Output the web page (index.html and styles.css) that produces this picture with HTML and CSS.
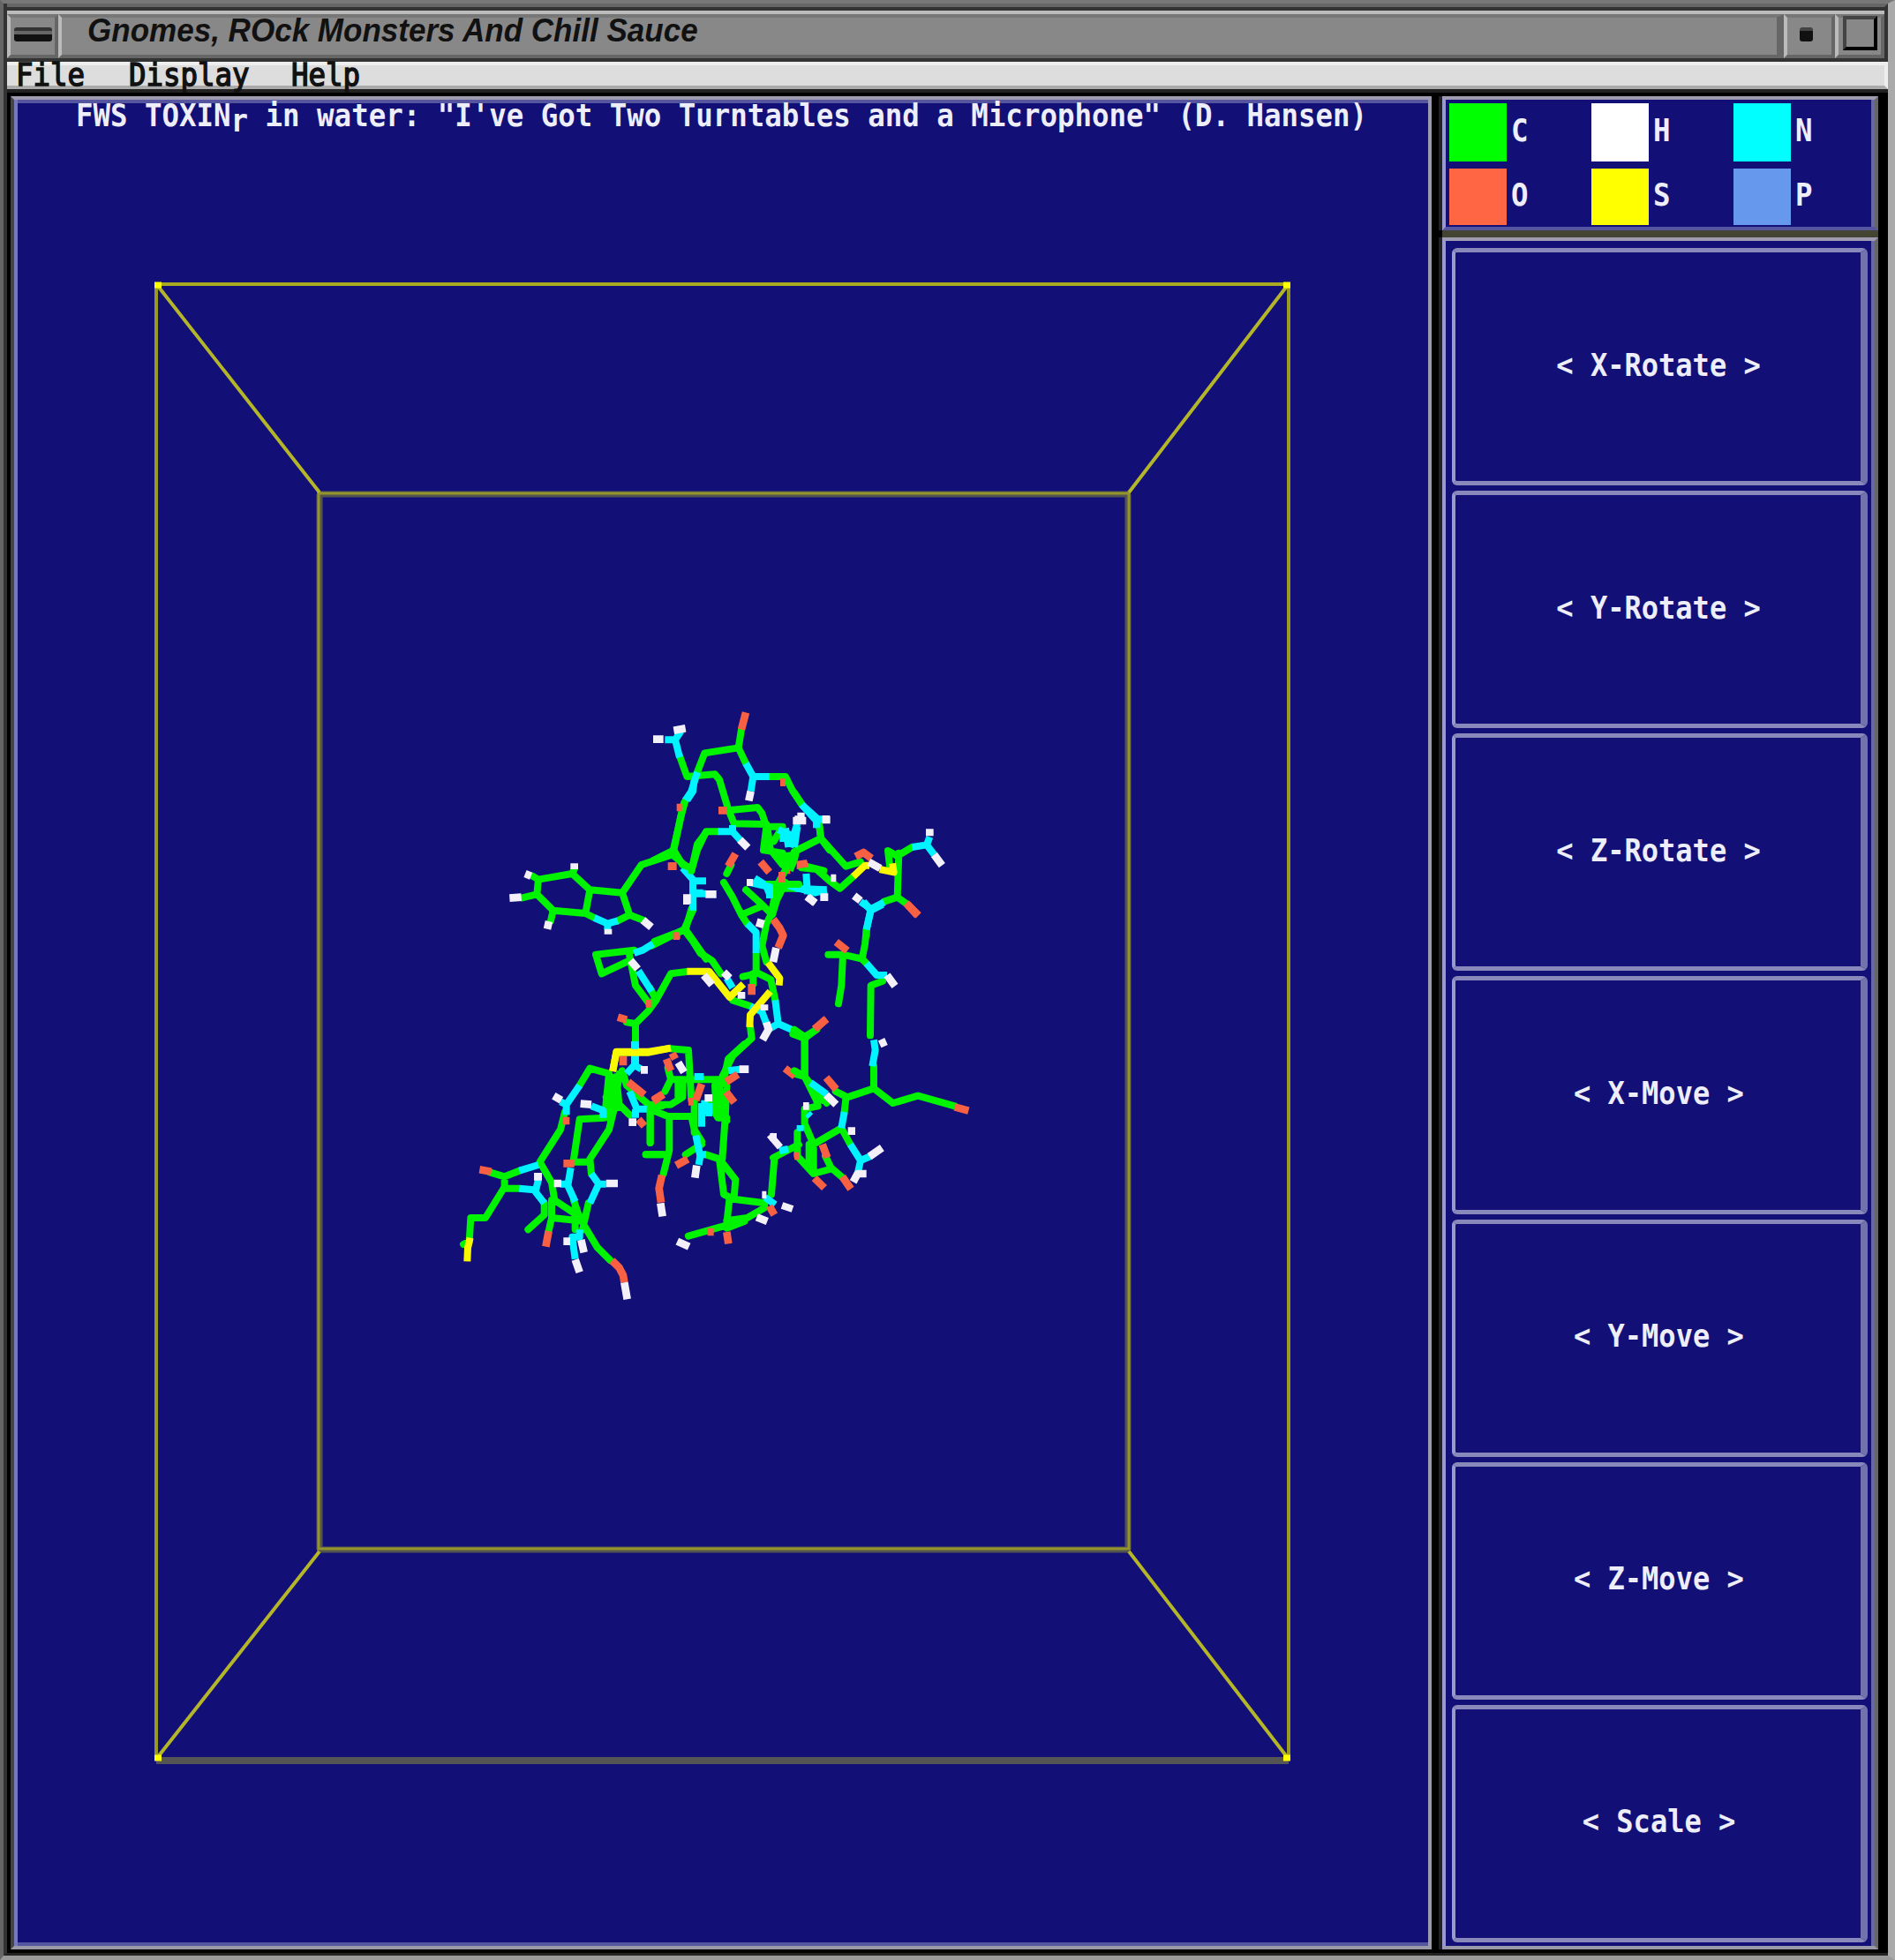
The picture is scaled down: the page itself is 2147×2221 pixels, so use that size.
FILE: index.html
```html
<!DOCTYPE html>
<html lang="en">
<head>
<meta charset="utf-8">
<title>Gnomes, ROck Monsters And Chill Sauce</title>
<link rel="stylesheet" href="styles.css">
</head>
<body>
<div class="desktop">
<div class="window">
  <header class="titlebar">
    <div class="tb-btn menu-btn"><span class="dash"></span></div>
    <div class="tb-title"><span>Gnomes, ROck Monsters And Chill Sauce</span></div>
    <div class="tb-btn min-btn"><span class="dot"></span></div>
    <div class="tb-btn max-btn"><span class="square"></span></div>
  </header>
  <nav class="menubar"><span class="mono">File</span><span class="mono">Display</span><span class="mono">Help</span></nav>
  <main class="work">
    <section class="view">
      <h1 class="mono caption">FWS TOXIN<span class="low">r</span> in water: "I've Got Two Turntables and a Microphone" (D. Hansen)</h1>
      <svg class="scene" viewBox="20 153 1598 2048" width="1598" height="2048">
        <g class="box">
          <path class="dim" d="M177,1995H1460"/>
          <path class="side" d="M177,322V1993M1460,322V1993"/>
          <path class="top" d="M177,322H1460"/>
          <path class="inner" d="M362,560V1756M1278,560V1756"/>
          <path class="inner" d="M359,560H1281M359,1756H1281"/>
          <path class="core" d="M361,559H1279V1755H361Z"/>
          <path class="diag" d="M178,323L362,558M1459,323L1279,558M178,1992L362,1758M1459,1992L1279,1758"/>
          <path class="corner" d="M175,323h8M1454,323h8M175,1992h8M1454,1992h8"/>
        </g>
        <g class="mol" transform="translate(500 790) scale(.33333)">
          <path class="c" d="M330,620L445,600L505,655L615,665L640,740L690,760M505,655L490,735L520,750M490,735L380,725L325,670L330,620L310,608M325,670L275,682M380,725L372,760M445,600L452,585M640,740L600,760M615,665L680,570L785,535L850,590M785,535L825,360M850,590L870,500L900,460M850,720L830,790L725,830M830,790L900,890"/>
          <path class="n" d="M520,750L565,770L600,760M565,770V790M820,580L855,620V720M855,625H900M855,668H900M862,265L855,320L835,350"/>
          <path class="o" d="M770,575H800M790,808H812"/>
          <path class="h" d="M232,683L272,680M285,600L305,608M452,565V585M360,788L366,762M567,788V806M685,758L714,782M835,672V705"/>
        </g>
        <g class="mol" transform="translate(740 790) scale(.33333)">
          <path class="c" d="M90,200L115,270L210,262L225,280L255,380L275,430L385,432M150,255L175,190L290,172L300,110M290,172L315,225M395,270H450L475,320L510,370M110,350L95,400L70,520L0,555M70,520L100,570L130,580M255,385L355,375L370,395L385,440L375,520L440,530M385,440H440L410,490M220,457H180L150,520L130,590M250,600L265,570M565,435L570,480L490,520M570,480L600,520M400,520L440,570M520,575L580,590"/>
          <path class="blob" d="M375,455L400,440L410,515L440,530L500,520L490,560L475,595L435,575L420,540L370,525Z"/>
          <path class="n" d="M40,145H75L95,115M75,145L90,205M150,255L130,320L110,350M315,225L340,270H395M340,270L332,320M220,457H270L300,490M270,455V435M510,370L560,415L555,445M560,415H580M425,450L470,470M490,430L465,510M450,445L460,510M430,480H485"/>
          <path class="h" d="M0,143H35M70,113L110,106M332,320L325,352M295,485L322,512M475,420H520M490,405H515M575,415H600"/>
          <path class="o" d="M300,110L315,52M80,375H98M222,385H250M255,575L280,532M365,560L395,595M55,575H78M432,290H450M488,572H525M445,588H466"/>
        </g>
        <g class="mol" transform="translate(900 860) scale(.33333)">
          <path class="c" d="M0,115L25,155M85,230L90,270L0,315M90,270L175,365L225,350M25,370L75,375L120,415L155,440L200,400M325,370L318,312L350,330L400,300M355,320L350,470L305,485M350,470L385,495M245,600V580"/>
          <path class="n" d="M25,155L70,205L90,210M75,205V235M0,300L10,230M400,300L450,292L460,265M450,292L475,325M225,485L260,510L305,487M260,510L245,580M0,440L110,445M40,390L45,460"/>
          <path class="y" d="M200,400L240,362H255M290,375L338,385L333,355"/>
          <path class="o" d="M208,332L235,318L262,338M385,495L418,532M10,360L44,355"/>
          <path class="h" d="M0,205L35,210M95,207H122M460,238V262M475,325L502,362M253,350L292,372M203,465L225,482M42,468L72,490M92,470H115M124,405H142"/>
        </g>
        <g class="mol" transform="translate(660 1000) scale(.33333)">
          <path class="c" d="M375,95L345,160L375,200L400,240L440,265L470,310M345,160L235,215M175,230L45,245L65,310L160,265M160,250L180,350L225,410L250,400L230,360M250,400L300,310L355,303M250,400L225,435L180,480V545M180,480L150,475M480,0L510,50L540,110L560,140M555,25L610,75L645,110L660,60L690,0M540,110L610,80M645,100L625,140L610,215L625,270M590,240V310L545,320M590,305L640,330L655,400M580,310V345M510,400L570,420M570,490L575,530L510,590L475,660M715,515L755,530L795,500M755,530V660L720,650M755,660L830,750M660,20H720"/>
          <path class="n" d="M375,0V95M375,35H410M560,140L590,170V240M175,240L205,230L240,208M190,300L235,370M490,325L510,358M655,400L665,480L710,500M665,480L630,500M570,420L610,440L625,480M180,545V620M620,0L640,50M700,10L790,35L830,25"/>
          <path class="o" d="M308,182H330M648,125L670,155L682,180L665,222M575,345V382M215,412H235M120,458L150,467M790,500L828,464M688,632L722,658"/>
          <path class="y" d="M355,302H430L500,390L547,345M630,272L670,325L668,350M638,370L570,450L568,492M103,642L115,575H225L300,563"/>
          <path class="h" d="M355,40V72M418,40H455M163,265L188,294M412,315L440,348M480,305L500,325M608,125L600,152M658,222L648,270M625,475L632,500L612,535M540,372V395M618,415V435M765,48L790,70M808,50H832"/>
        </g>
        <g class="mol" transform="translate(900 1020) scale(.33333)">
          <path class="c" d="M245,100L240,150L230,200L165,185H115M165,185L160,290L150,352M230,200L245,215M300,275L260,290L258,460M270,565V640L180,670L140,650M270,640L335,690L420,665L545,700M75,440L35,465V600L75,680L80,700L35,710V760L65,830V920M0,440L35,465M0,580L35,600M175,675L170,720M160,775L65,830M160,775L190,830M105,870L125,910L160,940M10,790V870L65,930L120,915M50,620L95,680M50,830V910"/>
          <path class="n" d="M245,100L260,35L235,5M260,35L300,15M245,215L280,255H315M270,475L275,510L265,565M55,620L110,660M170,720L160,775M190,830L225,885L260,870M225,885L215,930M20,765V785M45,725L55,735"/>
          <path class="h" d="M315,255L342,292M290,490L312,480M108,662L142,695M182,785H207M255,872L298,842M200,958L215,930H245M30,700H50"/>
          <path class="o" d="M142,142L180,172M68,438L110,404M108,603L142,643M545,703L592,716M95,830L112,875M68,945L102,978M163,940L192,982M380,10L422,52M0,870H15"/>
        </g>
        <g class="mol" transform="translate(510 1180) scale(.33333)">
          <path class="c" d="M440,150L475,92L540,110L525,260L440,265L420,400M575,110L560,220L540,300L475,400L480,450M545,120L550,250M565,120L575,225M530,190L545,270M420,410H470M390,240L375,300L305,410L345,480L355,540L430,590M235,440L185,460L135,445M185,460V500H235M185,495L120,600H70L65,680L45,690M320,550V590L265,640M345,540V600L335,645M345,600L440,610M420,540L440,600L500,700L545,745M425,560V640M470,550L450,640M585,100L600,150L680,220H720M680,230V345M665,385H720M580,220L610,250"/>
          <path class="n" d="M440,150L395,215V250M395,215L375,205M480,220L520,235V260M300,420L235,440M235,500L285,505L320,550M290,510L300,470M410,430L400,490L425,545M375,485H405M480,450L505,485L475,550M505,485H530M440,640V665H415L425,740M610,170L635,230H680M627,0V80L600,110M625,80L650,95M630,230V260"/>
          <path class="o" d="M384,270H406M100,436L140,443M385,415H422M335,645L325,698M550,745L575,770L588,795L592,820M588,50V82M605,138L660,182M640,265L660,288M690,200L722,180"/>
          <path class="y" d="M68,668L60,702L58,748"/>
          <path class="h" d="M352,185L378,200M443,212L480,215M285,460H312M353,483H378M530,483H570M385,680H408M445,675L455,718M425,742L440,785M592,820L602,877M648,97H672M620,262V288"/>
        </g>
        <g class="mol" transform="translate(680 1180) scale(.33333)">
          <path class="c" d="M240,25L300,30L310,200M240,130H400L430,150L425,260L415,400M405,130V220L430,270M390,150L395,250M375,200L400,260H430M230,90L240,130L220,170M170,215H240L280,190V140M265,140V190M170,230V345M180,235L230,255H310L320,300L345,340M320,200V310M235,255V370L215,450M155,385H230M345,350L290,385M360,385L405,400L420,520L440,530L430,620M405,400L460,470L455,530M440,535L560,550M430,625L300,662M430,610L500,600L560,565M430,635L490,612M420,130L435,60L490,10M582,520L592,400"/>
          <path class="n" d="M320,120H352M345,210V290M370,210V255M355,200V250M325,320L340,390L335,420M340,385H360M435,100L475,95M560,530L595,555"/>
          <path class="o" d="M225,60L240,100M245,40L255,60M180,205L215,180M345,145L325,200M428,138L468,112M428,172L456,208M258,422L298,400M210,455L200,500L207,548M430,648L436,688M365,648H386M575,560L592,590M300,205H315"/>
          <path class="y" d="M42,102L55,38H165L240,23"/>
          <path class="h" d="M265,72L285,105M368,180V205M473,95H505M328,422L322,464M205,550L212,595M262,680L302,698M550,522H565M532,598L568,612M577,325H600"/>
        </g>
        <g class="mol abs">
          <path class="c" d="M876,1312L905,1297M893,980L880,1004L874,1035M868,1002H905"/>
          <path class="n" d="M883,1304L893,1302M850,1000L872,1005V1018M855,995L866,1002"/>
          <path class="o" d="M886,988V1000"/>
          <path class="h" d="M872,1286L884,1300M886,1366L898,1370M846,1000H853"/>
        </g>
      </svg>
    </section>
    <aside class="side-col">
      <section class="legend">
        <div class="atom"><i class="sw green"></i><b class="mono">C</b></div>
        <div class="atom"><i class="sw white"></i><b class="mono">H</b></div>
        <div class="atom"><i class="sw cyan"></i><b class="mono">N</b></div>
        <div class="atom"><i class="sw coral"></i><b class="mono">O</b></div>
        <div class="atom"><i class="sw yellow"></i><b class="mono">S</b></div>
        <div class="atom"><i class="sw blue"></i><b class="mono">P</b></div>
      </section>
      <section class="controls">
        <button class="ctl"><span class="mono">&lt; X-Rotate &gt;</span></button>
        <button class="ctl"><span class="mono">&lt; Y-Rotate &gt;</span></button>
        <button class="ctl"><span class="mono">&lt; Z-Rotate &gt;</span></button>
        <button class="ctl"><span class="mono">&lt; X-Move &gt;</span></button>
        <button class="ctl"><span class="mono">&lt; Y-Move &gt;</span></button>
        <button class="ctl"><span class="mono">&lt; Z-Move &gt;</span></button>
        <button class="ctl"><span class="mono">&lt; Scale &gt;</span></button>
      </section>
    </aside>
  </main>
</div>
</div>
</body>
</html>
```
FILE: styles.css
```css
* { box-sizing: border-box; }
body { margin: 0; background: #999; }
.desktop {
  width: 2147px; height: 2221px;
  display: flex; flex-direction: column;
  border-top: 4px solid #777;
  border-left: 4px solid #666;
  border-right: 8px solid #aaa;
  border-bottom: 5px solid #999;
}
.window {
  flex: 1; display: flex; flex-direction: column;
  background: #000;
  border-left: 4px solid #333;
  border-bottom: 3px solid #222;
}
/* title bar */
.titlebar {
  height: 66px; display: flex;
  background: #888;
  border-top: 4px solid #666;
  border-bottom: 4px solid #333;
  box-shadow: inset 0 4px #333, inset 0 8px #bbb, inset 0 -4px #666;
  border-right: 4px solid #333;
}
.tb-btn, .tb-title { margin-top: 8px; display: flex; align-items: center; }
.tb-btn { justify-content: center; border: 4px solid #777; border-left-color: #bbb; border-right-color: #666; border-bottom-color: #666; }
.menu-btn { width: 58px; }
.min-btn { width: 58px; padding-right: 8px; padding-bottom: 4px; }
.max-btn { width: 56px; padding-bottom: 7px; }
.tb-title { flex: 1; border: 4px solid #777; border-left-color: #bbb; border-right: 8px solid #666; border-bottom-color: #666; padding-left: 29px; }
.tb-title span {
  font: italic bold 36px/40px "Liberation Sans", Arial, sans-serif;
  color: #111; white-space: nowrap; transform-origin: 0 50%; transform: translateY(-6px) scaleX(.973);
}
.dash { width: 43px; height: 16px; background: linear-gradient(#333 4px, #666 4px 8px, #111 8px); border-radius: 3px; margin-bottom: 5px; }
.dot { width: 15px; height: 16px; background: #111; border-radius: 3px; border-top: 4px solid #444; }
.square { width: 39px; height: 39px; flex: none; border: 4px solid #444; border-right-color: #000; border-bottom-color: #000; }
/* text in the fixed-width terminal face */
.mono {
  display: inline-block;
  font: bold 36px/36px "DejaVu Sans Mono", monospace;
  white-space: pre; color: #eeeefa;
  transform: scaleX(.9); transform-origin: 0 50%;
}
.menubar {
  height: 31px; display: flex; gap: 36px;
  padding-left: 10px;
  background: #ddd; border-top: 4px solid #eee; border-bottom: 4px solid #aaa;
  border-right: 4px solid #eee;
}
.menubar .mono { color: #111; margin-top: -7px; font-weight: normal; -webkit-text-stroke: 1.5px #111; position: relative; }
.menubar .mono:nth-child(1) { width: 92px; }
.menubar .mono:nth-child(2) { width: 148px; }
/* work area */
.work {
  flex: 1; display: grid; grid-template-columns: 1618px 1fr;
  border-top: 4px solid #222; padding-top: 4px; padding-bottom: 4px; padding-left: 4px;
}
.view {
  width: 1610px; height: 2100px; background: #121077;
  border-left: 4px solid #444; border-right: 4px solid #9999b0;
  border-top: 4px solid #9f9bb0; border-bottom: 4px solid #9999aa;
  box-shadow: inset 4px 0 #7777bb, inset 0 4px #5555a0, inset 0 -4px #5555a0;
  display: flex; flex-direction: column;
}
.caption { margin: 0 0 3px 70px; height: 37px; width: 1500px; }
.low { position: relative; top: 6px; }
.scene { display: block; margin-left: 4px; }
.box path { fill: none; stroke-width: 4; }
.box .top { stroke: #aaaa22; }
.box .side { stroke: #999922; }
.box .dim { stroke: #555; stroke-width: 8; }
.box .inner { stroke: #555550; stroke-width: 7; }
.box .core { stroke: #94942c; stroke-width: 3; }
.box .diag { stroke: #b5b52a; }
.box .corner { stroke: #ff0; stroke-width: 7; }
.mol path { fill: none; stroke-width: 24; stroke-linejoin: round; }
.mol.abs path { stroke-width: 8; }
.mol .c { stroke: #00f400; stroke-linecap: round; }
.mol path.blob { fill: #00f400; }
.mol .n { stroke: #00f4ff; }
.mol .o { stroke: #f86044; stroke-width: 26; }
.mol .h { stroke: #f4f0fa; stroke-width: 26; }
.mol .y { stroke: #f8f800; stroke-width: 24; }
/* right column */
.side-col { display: flex; flex-direction: column; padding-left: 4px; width: 498px; }
.legend, .controls { background: #121077; border-left: 4px solid #9999cc; border-right: 4px solid #666; box-shadow: inset -4px 0 #6666aa, -4px 0 #222; }
.legend {
  height: 152px; border-top: 4px solid #9f9bb0; border-bottom: 4px solid #5555a0;
  display: grid; grid-template-columns: 161px 161px 1fr; grid-template-rows: 66px 64px; row-gap: 8px;
  padding: 4px 0 0 4px;
}
.atom { display: flex; align-items: center; gap: 5px; }
.atom .mono { margin-top: -4px; }
.sw { width: 65px; height: 100%; }
.green { background: #0f0; }
.white { background: #fff; }
.cyan { background: #0ff; }
.coral { background: #ff6644; }
.yellow { background: #ff0; }
.blue { background: #6699ee; }
.controls {
  flex: 1; margin-top: 8px; border-top: 4px solid #9f9bb0; border-bottom: 4px solid #9999aa;
  box-shadow: inset -4px 0 #6666aa, -4px 0 #222, 0 -8px #444433;
  padding: 8px 8px 4px 7px; display: flex; flex-direction: column; gap: 6px;
}
.ctl {
  flex: 1; background: #121077; padding: 0; border-radius: 6px;
  border: 4px solid #9999cc; border-right: 8px solid #7272ac; border-top: 5px solid #8888bb; border-bottom: 5px solid #8888bb;
}
.ctl .mono { transform-origin: 50% 50%; margin-top: -4px; transform: translateX(1px) scaleX(.89); }
```
